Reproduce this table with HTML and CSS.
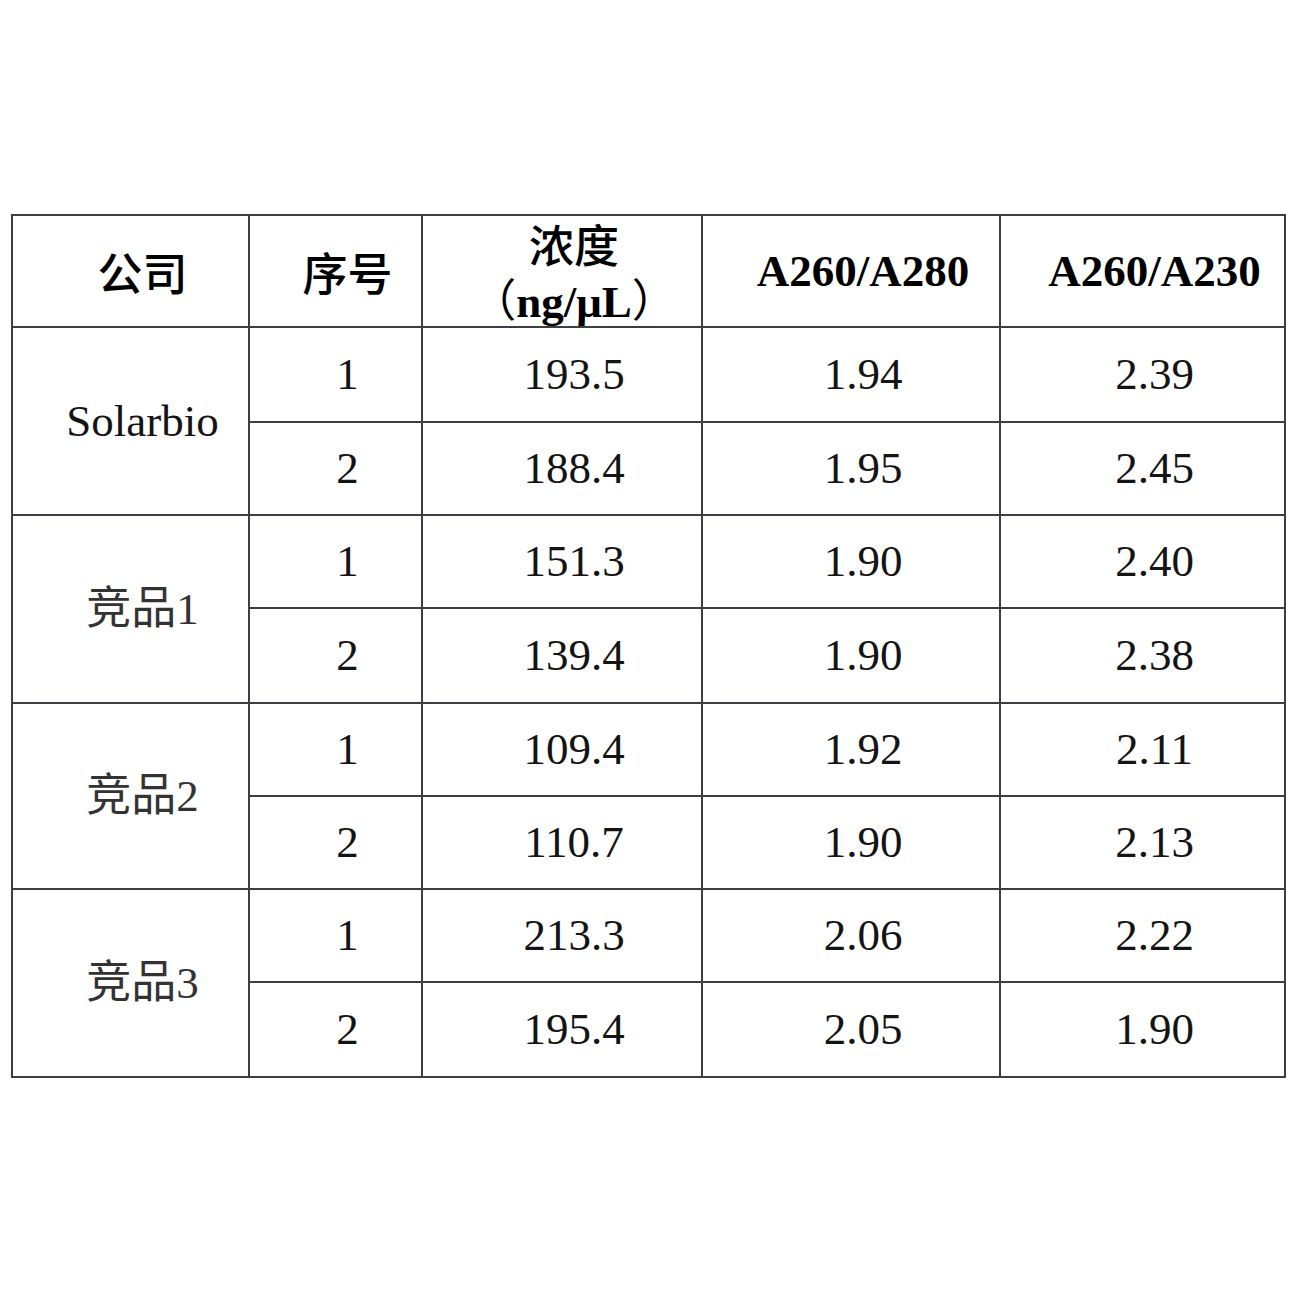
FILE: index.html
```
<!DOCTYPE html>
<html lang="zh">
<head>
<meta charset="utf-8">
<link rel="stylesheet" href="styles.css">
</head>
<body>
<table class="data">
  <colgroup>
    <col class="c1"><col class="c2"><col class="c3"><col class="c4"><col class="c5">
  </colgroup>
  <thead>
    <tr class="head">
      <th class="cjk">公司</th>
      <th class="cjk">序号</th>
      <th class="two"><div class="line cjk">浓度</div><div class="line"><span class="paren">（</span>ng/μL<span class="paren">）</span></div></th>
      <th>A260/A280</th>
      <th>A260/A230</th>
    </tr>
  </thead>
  <tbody>
    <tr class="r95"><td rowspan="2">Solarbio</td><td>1</td><td>193.5</td><td>1.94</td><td>2.39</td></tr>
    <tr class="r93"><td>2</td><td>188.4</td><td>1.95</td><td>2.45</td></tr>
    <tr class="r93"><td rowspan="2" class="name">竞品1</td><td>1</td><td>151.3</td><td>1.90</td><td>2.40</td></tr>
    <tr class="r95"><td>2</td><td>139.4</td><td>1.90</td><td>2.38</td></tr>
    <tr class="r93"><td rowspan="2" class="name">竞品2</td><td>1</td><td>109.4</td><td>1.92</td><td>2.11</td></tr>
    <tr class="r93"><td>2</td><td>110.7</td><td>1.90</td><td>2.13</td></tr>
    <tr class="r93"><td rowspan="2" class="name">竞品3</td><td>1</td><td>213.3</td><td>2.06</td><td>2.22</td></tr>
    <tr class="r95"><td>2</td><td>195.4</td><td>2.05</td><td>1.90</td></tr>
  </tbody>
</table>
</body>
</html>
```
FILE: styles.css
```
html, body {
  margin: 0;
  padding: 0;
  background: #ffffff;
}
body {
  padding: 214px 0 0 11px;
}
.data {
  border-collapse: collapse;
  table-layout: fixed;
  width: 1273px;
  font-family: "Liberation Serif", "Times New Roman", "Noto Sans CJK SC", serif;
  font-size: 45px;
  color: #141414;
}
.c1 { width: 237px; }
.c2 { width: 173px; }
.c3 { width: 280px; }
.c4 { width: 298px; }
.c5 { width: 285px; }
.data th, .data td {
  border: 2px solid #3d3d44;
  text-align: center;
  vertical-align: middle;
  padding: 0 0 0 24px;
  line-height: 1;
  white-space: nowrap;
}
.data th {
  font-weight: bold;
  color: #000;
}
.head { height: 112px; }
.head th.cjk, .cjk {
  font-family: "Noto Sans CJK SC", sans-serif;
  font-weight: 500;
}
.line {
  height: 54px;
  line-height: 54px;
  overflow: visible;
}
.paren {
  font-family: "Noto Sans CJK SC", sans-serif;
  font-weight: 400;
}
.r95 { height: 95px; }
.r93 { height: 93px; }
.r94 { height: 94px; }
.name {
  font-family: "Liberation Serif", "Noto Sans CJK SC", serif;
  color: #333;
}
```
